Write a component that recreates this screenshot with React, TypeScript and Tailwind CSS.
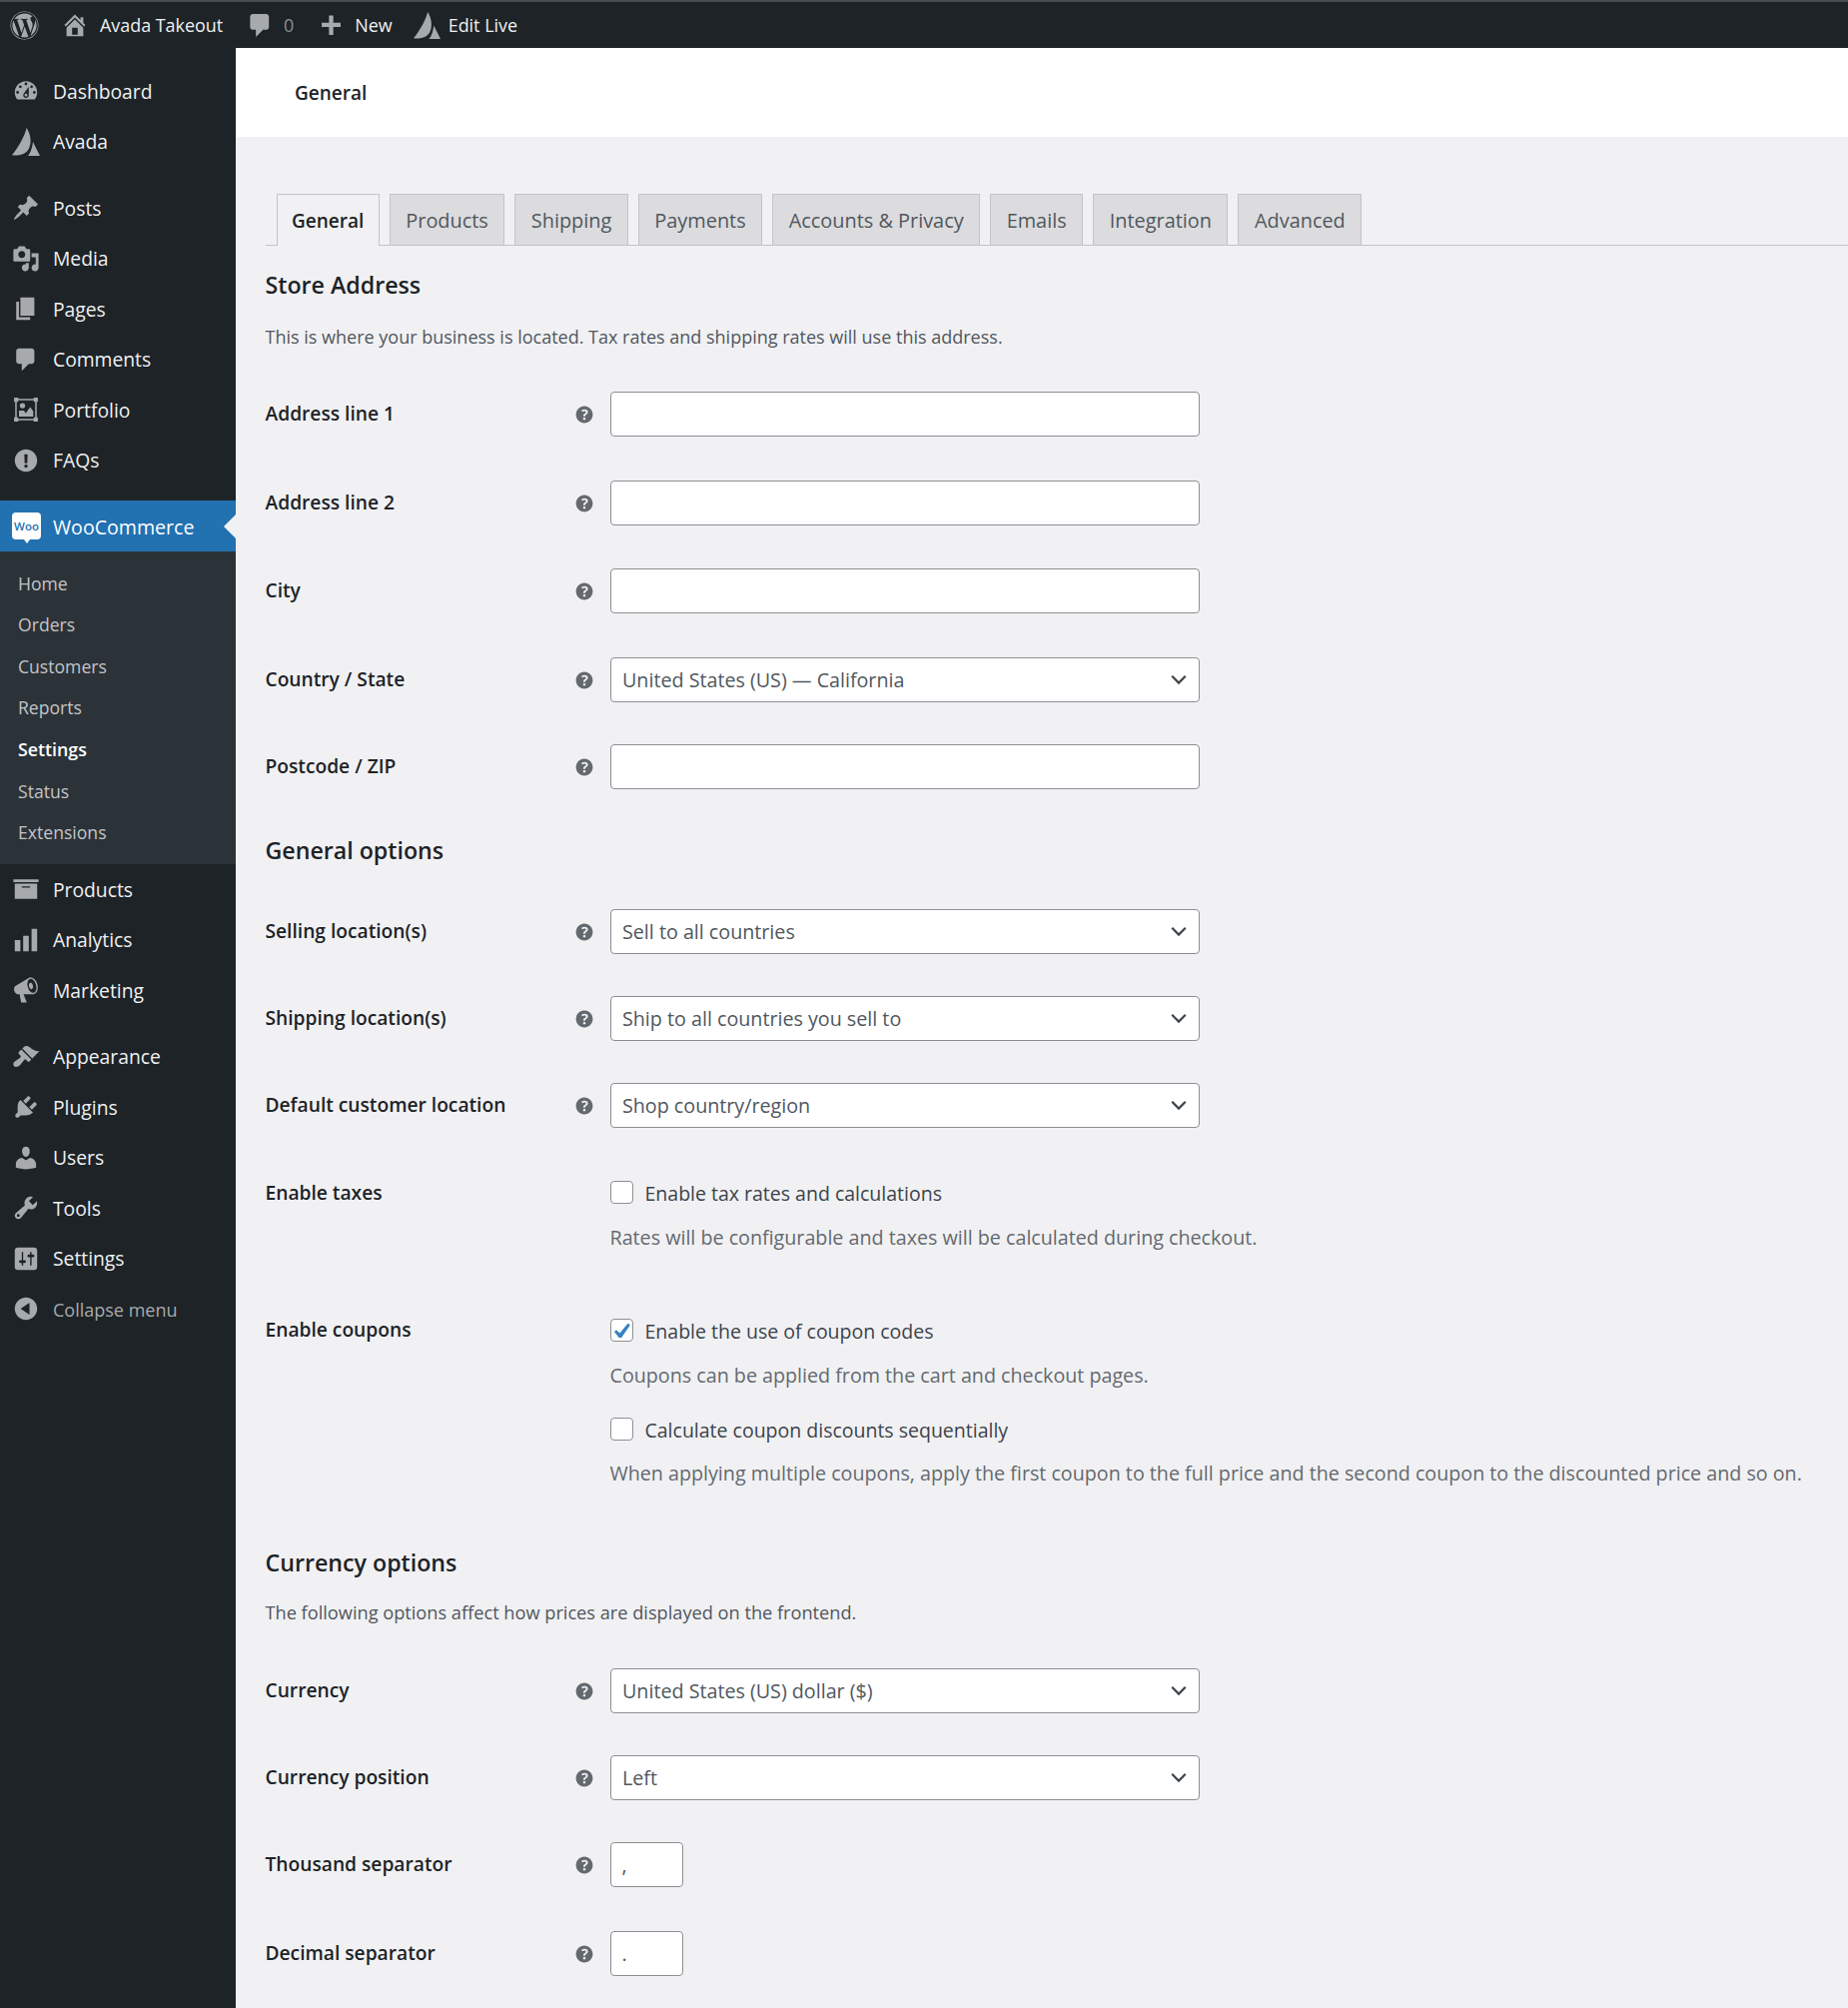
// App.tsx - WooCommerce general settings screen
import type { ReactNode } from "react";
import { FaWordpress } from "react-icons/fa";

const icons: Record<string, string> = {
  dashboard:
    "M3.76 16h12.48c1.1-1.37 1.76-3.11 1.76-5 0-4.42-3.58-8-8-8s-8 3.58-8 8c0 1.89.66 3.63 1.76 5zM10 4c.55 0 1 .45 1 1s-.45 1-1 1-1-.45-1-1 .45-1 1-1zM6 6c.55 0 1 .45 1 1s-.45 1-1 1-1-.45-1-1 .45-1 1-1zm8 0c.55 0 1 .45 1 1s-.45 1-1 1-1-.45-1-1 .45-1 1-1zm-5.37 5.55L12 7v6c0 1.1-.9 2-2 2s-2-.9-2-2c0-.57.24-1.08.63-1.45zM4 10c.55 0 1 .45 1 1s-.45 1-1 1-1-.45-1-1 .45-1 1-1zm12 0c.55 0 1 .45 1 1s-.45 1-1 1-1-.45-1-1 .45-1 1-1zm-5 3c0-.55-.45-1-1-1s-1 .45-1 1 .45 1 1 1 1-.45 1-1z",
  avada: "M10.500 0C9 6 4.500 14 0 19.500c4 .5 9.500 0 12-4.500 2.500-5 1-11-1.500-15zM15 10l5 10h-8.500c2-2.500 3-6 3.500-10z",
  posts:
    "M10.44 3.02l1.82-1.82 6.36 6.35-1.83 1.82c-1.05-.68-2.48-.57-3.41.36l-.75.75c-.92.93-1.04 2.35-.35 3.41l-1.83 1.82-2.41-2.41-2.8 2.79c-.42.42-3.38 2.71-3.8 2.29s1.86-3.39 2.28-3.81l2.79-2.79L4.1 9.36l1.83-1.82c1.05.69 2.48.57 3.4-.36l.75-.75c.93-.92 1.05-2.35.36-3.41z",
  media:
    "M13 11V4c0-.55-.45-1-1-1h-1.67L9 1H5L3.67 3H2c-.55 0-1 .45-1 1v7c0 .55.45 1 1 1h10c.55 0 1-.45 1-1zM7 4.500c1.380 0 2.500 1.120 2.500 2.500S8.380 9.500 7 9.500 4.500 8.380 4.500 7 5.620 4.500 7 4.500zM14 6h5v10.500c0 1.380-1.120 2.500-2.500 2.500S14 17.880 14 16.500s1.120-2.500 2.500-2.500c.170 0 .340.020.500.050V9h-3V6zm-4 8.050V13h2v3.500c0 1.380-1.120 2.500-2.500 2.500S7 17.880 7 16.500 8.120 14 9.500 14c.170 0 .340.020.500.050z",
  pages: "M6 15V2h10v13H6zm-1 1h8v2H3V5h2v11z",
  comments: "M5 2h9c1.100 0 2 .9 2 2v7c0 1.100-.9 2-2 2h-2l-5 5v-5H5c-1.100 0-2-.9-2-2V4c0-1.100.9-2 2-2z",
  faq: "M10 2c4.420 0 8 3.580 8 8s-3.580 8-8 8-8-3.580-8-8 3.580-8 8-8zm1.200 3.500H8.800l.3 6.500h1.800l.3-6.500zM10 12.800c-.7 0-1.200.5-1.200 1.150s.5 1.150 1.200 1.150 1.200-.5 1.200-1.150-.5-1.150-1.200-1.150z",
  products: "M19 3v2H1V3h18zM2 6h16v11H2V6zm11 3V8H7v1h6z",
  analytics: "M18 18V2h-4v16h4zm-6 0V7H8v11h4zm-6 0v-8H2v8h4z",
  marketing:
    "M18.150 5.940c.460 1.620.380 3.220-.020 4.480-.420 1.280-1.260 2.180-2.300 2.480-.160.060-.260.060-.400.060-.060.020-.120.020-.180.020-.060.020-.140.020-.220.020h-6.800l2.220 5.500c.020.140-.060.260-.140.340-.080.100-.240.160-.340.160H6.950c-.100 0-.260-.060-.340-.160-.080-.080-.160-.200-.140-.340l-1-5.500H4.250l-.020-.020c-.500.060-1.080-.180-1.540-.620s-.880-1.080-1.060-1.880c-.240-.800-.200-1.560-.020-2.200.180-.620.580-1.080 1.060-1.300l.020-.020 9-5.400c.100-.060.180-.100.240-.160.060-.040.140-.080.240-.120.160-.080.280-.120.500-.180 1.040-.300 2.240.100 3.220.980s1.840 2.240 2.260 3.860zm-2.580 5.980h-.020c.400-.100.740-.340 1.040-.700.580-.700.860-1.760.860-3.040-.020-.640-.100-1.300-.280-1.980-.340-1.360-1.020-2.500-1.780-3.240s-1.680-1.100-2.460-.880c-.820.220-1.400.960-1.700 2-.320 1.040-.280 2.360.060 3.720.380 1.360 1 2.500 1.800 3.240.780.740 1.620 1.100 2.480.880zm-2.540-7.080c.220-.040.420-.020.620.040.380.160.760.480 1.020 1s.420 1.200.420 1.780c0 .300-.040.560-.120.800-.180.480-.440.840-.860.940-.340.100-.800-.060-1.140-.400s-.640-.860-.780-1.500c-.180-.620-.120-1.240.020-1.720s.480-.840.820-.940z",
  appearance:
    "M14.480 11.060L7.410 3.990l1.500-1.500c.500-.560 2.300-.470 3.510.320 1.210.800 1.430 1.280 2.910 2.100 1.180.640 2.450 1.260 4.450.850zm-.710.710L6.700 4.700 4.930 6.470c-.390.390-.390 1.020 0 1.410l1.060 1.060c.390.390.390 1.030 0 1.420-.600.600-1.430 1.110-2.210 1.690-.350.260-.700.530-1.010.840C1.430 13.230 1 14.290 1 15.170c0 .600.200 1.110.500 1.410.290.290.770.500 1.410.500.880 0 1.940-.430 3.290-1.780.310-.310.580-.660.840-1.010.580-.780 1.090-1.610 1.690-2.210.390-.390 1.030-.390 1.420 0l1.060 1.060c.390.390 1.020.390 1.410 0z",
  plugins:
    "M13.110 4.360L9.870 7.600 8 5.730l3.240-3.240c.350-.340 1.050-.200 1.560.320.520.510.660 1.210.310 1.550zm-8 1.770l.910-1.120 9.010 9.010-1.190.840c-.710.710-2.630 1.160-3.820 1.160H6.140L4.900 17.260c-.590.590-1.540.590-2.120 0-.590-.580-.590-1.530 0-2.120l1.240-1.240v-3.880c0-1.130.400-3.190 1.090-3.890zm7.260 3.970l3.240-3.240c.340-.350 1.040-.210 1.550.310.520.510.660 1.210.310 1.550l-3.240 3.250z",
  users:
    "M10 9.250c-2.270 0-2.730-3.440-2.730-3.440C7 4.020 7.820 2 9.970 2c2.160 0 2.980 2.020 2.710 3.810 0 0-.410 3.440-2.680 3.440zm0 2.570L12.720 10c2.390 0 4.520 2.330 4.520 4.530v2.490s-3.650 1.130-7.240 1.130c-3.650 0-7.240-1.130-7.240-1.130v-2.490c0-2.250 1.940-4.480 4.470-4.480z",
  tools:
    "M16.680 9.770c-1.340 1.340-3.300 1.670-4.950.990l-5.410 6.520c-.990.990-2.590.990-3.580 0s-.990-2.590 0-3.570l6.520-5.420c-.680-1.650-.350-3.610.990-4.950 1.280-1.280 3.120-1.620 4.720-1.060l-2.890 2.890 2.820 2.820 2.860-2.870c.530 1.580.180 3.390-1.080 4.650zM3.810 16.210c.400.390 1.040.390 1.430 0 .400-.400.400-1.040 0-1.430-.390-.400-1.030-.400-1.430 0-.390.390-.390 1.030 0 1.430z",
  settings:
    "M18 16V4c0-1.100-.9-2-2-2H4c-1.100 0-2 .9-2 2v12c0 1.100.9 2 2 2h12c1.100 0 2-.9 2-2zM8 11h1c.550 0 1 .450 1 1s-.450 1-1 1H8v1.500c0 .280-.220.500-.500.500s-.500-.220-.500-.500V13H6c-.550 0-1-.450-1-1s.450-1 1-1h1V5.500c0-.280.220-.500.500-.500s.500.220.500.500V11zm5-2h-1c-.550 0-1-.450-1-1s.450-1 1-1h1V5.500c0-.280.220-.500.500-.500s.500.220.500.500V7h1c.550 0 1 .450 1 1s-.450 1-1 1h-1v5.500c0 .280-.220.500-.500.500s-.500-.220-.500-.500V9z",
  collapse: "M10 2c4.420 0 8 3.580 8 8s-3.580 8-8 8-8-3.580-8-8 3.580-8 8-8zm2.500 3.800L6.200 10l6.300 4.200V5.800z",
  home: "M16 8.500l1.530 1.530-1.060 1.060L10 4.620l-6.470 6.470-1.060-1.060L10 2.500l4 4v-2h2v4zm-6-2.460l6 5.990V18H4v-5.970zM12 17v-5H8v5h4z",
  plus: "M17 8v3.200h-5.400V17H8.400v-5.800H3V8h5.400V2.500h3.200V8H17z",
};

const helpPath =
  "M17 10c0-3.870-3.140-7-7-7-3.870 0-7 3.130-7 7 0 3.860 3.130 7 7 7 3.860 0 7-3.140 7-7zm-6.300 1.480H9.140v-.430c0-.380.080-.700.240-.980s.460-.570.880-.890c.410-.290.680-.530.810-.710.140-.180.200-.390.200-.62 0-.250-.090-.44-.280-.58-.190-.130-.45-.19-.79-.19-.58 0-1.250.190-2 .570l-.64-1.280c.87-.49 1.800-.74 2.770-.74.810 0 1.450.200 1.920.580.480.390.710.910.710 1.550 0 .430-.090.800-.290 1.110-.190.320-.570.670-1.110 1.060-.380.280-.610.490-.710.630-.100.150-.150.340-.150.570v.350zm-1.470 2.740c-.180-.180-.280-.430-.28-.75 0-.330.090-.58.270-.76s.44-.27.78-.27c.33 0 .59.090.77.27.18.190.27.44.27.76 0 .31-.09.56-.28.74-.18.19-.44.28-.76.28-.33 0-.59-.09-.77-.27z";

const Dash = ({ name, size = 28 }: { name: string; size?: number }) => (
  <svg width={size} height={size} viewBox="0 0 20 20" className="shrink-0 fill-[#a7aaad]">
    <path fillRule="evenodd" d={icons[name]} />
  </svg>
);

const PortfolioIcon = () => (
  <svg width={28} height={28} viewBox="0 0 20 20" className="shrink-0 fill-[#a7aaad]">
    <path
      fillRule="evenodd"
      d="M1.500 1.500h3v.8h11v-.8h3v3h-.8v11h.8v3h-3v-.8h-11v.8h-3v-3h.8v-11h-.8v-3zm1.900 3v11h1v1.100h11.200v-1.100h1v-11h-1V3.400H4.400v1.100h-1z"
    />
    <circle cx="7.500" cy="7.200" r="1.900" />
    <path d="M5 15v-4.300h3.600l1.200 2 3.200-4.500 2.200 3.100V15z" />
  </svg>
);

const HelpTip = () => (
  <svg width={24} height={24} viewBox="0 0 20 20" className="mr-[14px] shrink-0 fill-[#646970]">
    <path d={helpPath} fillRule="evenodd" />
  </svg>
);

const SideItem = ({ icon, label }: { icon: string; label: string }) => (
  <div className="flex h-[50.5px] items-center gap-[13px] pl-[12px] text-[19.3px] text-[#f0f0f1]">
    {icon === "portfolio" ? <PortfolioIcon /> : <Dash name={icon} />}
    <span className="mt-[2px]">{label}</span>
  </div>
);

const subItems = ["Home", "Orders", "Customers", "Reports", "Settings", "Status", "Extensions"];

const Sidebar = () => (
  <aside className="w-[236px] shrink-0 bg-[#1d2327] pt-[18px]">
    <SideItem icon="dashboard" label="Dashboard" />
    <SideItem icon="avada" label="Avada" />
    <div className="h-[16px]" />
    <SideItem icon="posts" label="Posts" />
    <SideItem icon="media" label="Media" />
    <SideItem icon="pages" label="Pages" />
    <SideItem icon="comments" label="Comments" />
    <SideItem icon="portfolio" label="Portfolio" />
    <SideItem icon="faq" label="FAQs" />
    <div className="h-[15px]" />

    {/* Active menu */}
    <div className="relative flex h-[51px] items-center gap-[12px] bg-[#2271b1] pl-[12px] text-[19.6px] text-white">
      <div className="relative flex h-[27px] w-[29px] items-center justify-center rounded-[4px] bg-white">
        <span className="text-[11.5px] leading-none font-semibold text-[#2271b1]">Woo</span>
        <span className="absolute -bottom-[4px] left-[12px] size-0 border-x-[3px] border-t-[4px] border-x-transparent border-t-white" />
      </div>
      <span className="mt-[2px]">WooCommerce</span>
      <span className="absolute top-[14px] right-0 size-0 border-y-[12px] border-r-[12px] border-y-transparent border-r-[#f1f1f3]" />
    </div>
    <div className="bg-[#2c3338] py-[11px]">
      {subItems.map((item) => (
        <div
          key={item}
          className={
            item === "Settings"
              ? "flex h-[41.6px] items-center pl-[18px] text-[17.8px] font-semibold text-white"
              : "flex h-[41.6px] items-center pl-[18px] text-[17.6px] text-[#c3c4c7]"
          }
        >
          {item}
        </div>
      ))}
    </div>

    <SideItem icon="products" label="Products" />
    <SideItem icon="analytics" label="Analytics" />
    <SideItem icon="marketing" label="Marketing" />
    <div className="h-[16px]" />
    <SideItem icon="appearance" label="Appearance" />
    <SideItem icon="plugins" label="Plugins" />
    <SideItem icon="users" label="Users" />
    <SideItem icon="tools" label="Tools" />
    <SideItem icon="settings" label="Settings" />
    <div className="flex h-[50.5px] items-center gap-[13px] pl-[12px] text-[18px] text-[#a7aaad]">
      <Dash name="collapse" />
      <span className="mt-[2px]">Collapse menu</span>
    </div>
  </aside>
);

const TopBar = () => (
  <header className="flex h-[48px] items-center border-t-2 border-[#474c50] bg-[#1d2327] pl-[10px] text-[17.9px] text-[#f0f0f1]">
    <FaWordpress className="size-[29px] text-[#a7aaad]" />
    <span className="ml-[22px] flex">
      <Dash name="home" size={28} />
    </span>
    <span className="ml-[11px]">Avada Takeout</span>
    <span className="ml-[23px]">
      <Dash name="comments" size={29} />
    </span>
    <span className="ml-[9px] text-[#8c8f94]">0</span>
    <span className="ml-[24px]">
      <Dash name="plus" size={27} />
    </span>
    <span className="ml-[10px]">New</span>
    <span className="ml-[21px]">
      <Dash name="avada" size={27} />
    </span>
    <span className="ml-[8px]">Edit Live</span>
  </header>
);

const tabs = ["General", "Products", "Shipping", "Payments", "Accounts & Privacy", "Emails", "Integration", "Advanced"];

const Tabs = () => (
  <nav className="mt-[57px] flex h-[52px] gap-[10px] border-b border-[#c3c4c7] pl-[11px]">
    {tabs.map((tab, i) => (
      <div
        key={tab}
        className={
          i === 0
            ? "-mb-px flex h-[52px] items-center border border-b-0 border-[#c3c4c7] bg-[#f1f1f3] px-[14.5px] pt-[1px] text-[19px] font-semibold text-[#1d2327]"
            : "flex h-[51px] items-center border border-b-0 border-[#c3c4c7] bg-[#dcdcde] px-[15.5px] pt-[1px] text-[19.9px] text-[#50575e]"
        }
      >
        {tab}
      </div>
    ))}
  </nav>
);

const Heading = ({ className, children }: { className: string; children: ReactNode }) => (
  <h2 className={`h-[30px] text-[23.2px] leading-[30px] font-semibold text-[#1d2327] ${className}`}>{children}</h2>
);

const Row = ({ label, className, children }: { label: string; className: string; children: ReactNode }) => (
  <div className={`flex h-[45px] items-center ${className}`}>
    <label className="w-[307px] shrink-0 text-[19.2px] font-semibold text-[#1d2327]">{label}</label>
    <HelpTip />
    {children}
  </div>
);

const TextField = ({ small, value = "" }: { small?: boolean; value?: string }) => (
  <input
    readOnly
    value={value}
    className={
      small
        ? "h-[45px] w-[73px] rounded-[4px] border border-[#8c8f94] bg-white px-[11px] text-[19.7px] text-[#50575e]"
        : "h-[45px] w-[590px] rounded-[4px] border border-[#8c8f94] bg-white px-[11px] text-[19.7px] text-[#50575e]"
    }
  />
);

const SelectField = ({ value }: { value: string }) => (
  <div className="relative h-[45px] w-[590px]">
    <select
      defaultValue={value}
      className="h-full w-full appearance-none rounded-[4px] border border-[#8c8f94] bg-white pl-[11.5px] text-[19.7px] text-[#50575e]"
    >
      <option>{value}</option>
    </select>
    <svg width={18} height={18} viewBox="0 0 20 20" className="pointer-events-none absolute top-[13px] right-[12px] fill-none stroke-[#3c434a] stroke-[2.4]">
      <path d="M2.500 6.500L10 14l7.500-7.500" />
    </svg>
  </div>
);

const Check = ({ checked, label, className }: { checked?: boolean; label: string; className: string }) => (
  <label className={`ml-[345px] flex h-[23px] items-center gap-[12px] text-[19.5px] text-[#3c434a] ${className}`}>
    <span className="relative size-[23px] shrink-0 rounded-[4px] border border-[#8c8f94] bg-white">
      {checked && (
        <svg viewBox="0 0 20 20" className="absolute inset-0 fill-[#3582c4]">
          <path d="M15.800 3.500l2.200 1.500-8.300 12.200H7.300L2.800 11.500l2-1.800 3.200 3.100z" />
        </svg>
      )}
    </span>
    <span className="pt-[2px]">{label}</span>
  </label>
);

const Desc = ({ className, children }: { className: string; children: ReactNode }) => (
  <p className={`ml-[345px] h-[24px] text-[19.7px] leading-[24px] whitespace-nowrap text-[#646970] ${className}`}>{children}</p>
);

export default function App() {
  return (
    <div className="h-[2010px] w-[1850px] overflow-hidden bg-[#f1f1f3] font-['Open_Sans',sans-serif]">
      <TopBar />
      <div className="flex h-[1962px]">
        <Sidebar />
        <main className="min-w-0 flex-1">
          <div className="flex h-[89px] items-center bg-white pt-[1px] pl-[59px] text-[19px] font-semibold text-[#1d2327]">General</div>

          <div className="ml-[29.5px]">
            <Tabs />

            <Heading className="mt-[24px]">Store Address</Heading>
            <p className="mt-[25px] h-[24px] text-[18px] leading-[24px] text-[#50575e]">
              This is where your business is located. Tax rates and shipping rates will use this address.
            </p>

            <Row label="Address line 1" className="mt-[43px]">
              <TextField />
            </Row>
            <Row label="Address line 2" className="mt-[44px]">
              <TextField />
            </Row>
            <Row label="City" className="mt-[43px]">
              <TextField />
            </Row>
            <Row label="Country / State" className="mt-[44px]">
              <SelectField value="United States (US) — California" />
            </Row>
            <Row label="Postcode / ZIP" className="mt-[42px]">
              <TextField />
            </Row>

            <Heading className="mt-[46px]">General options</Heading>
            <Row label="Selling location(s)" className="mt-[44px]">
              <SelectField value="Sell to all countries" />
            </Row>
            <Row label="Shipping location(s)" className="mt-[42px]">
              <SelectField value="Ship to all countries you sell to" />
            </Row>
            <Row label="Default customer location" className="mt-[42px]">
              <SelectField value="Shop country/region" />
            </Row>

            <div className="relative mt-[53px]">
              <span className="absolute top-0 left-0 text-[19.2px] leading-[23px] font-semibold text-[#1d2327]">Enable taxes</span>
              <Check label="Enable tax rates and calculations" className="" />
            </div>
            <Desc className="mt-[22px]">Rates will be configurable and taxes will be calculated during checkout.</Desc>

            <div className="relative mt-[69px]">
              <span className="absolute -top-px left-0 text-[19.2px] leading-[23px] font-semibold text-[#1d2327]">Enable coupons</span>
              <Check checked label="Enable the use of coupon codes" className="" />
            </div>
            <Desc className="mt-[22px]">Coupons can be applied from the cart and checkout pages.</Desc>
            <Check label="Calculate coupon discounts sequentially" className="mt-[30px]" />
            <Desc className="mt-[21px]">
              When applying multiple coupons, apply the first coupon to the full price and the second coupon to the discounted price and so on.
            </Desc>

            <Heading className="mt-[62px]">Currency options</Heading>
            <p className="mt-[23px] h-[24px] text-[18.2px] leading-[24px] text-[#50575e]">
              The following options affect how prices are displayed on the frontend.
            </p>
            <Row label="Currency" className="mt-[44px]">
              <SelectField value="United States (US) dollar ($)" />
            </Row>
            <Row label="Currency position" className="mt-[42px]">
              <SelectField value="Left" />
            </Row>
            <Row label="Thousand separator" className="mt-[42px]">
              <TextField small value="," />
            </Row>
            <Row label="Decimal separator" className="mt-[44px]">
              <TextField small value="." />
            </Row>
          </div>
        </main>
      </div>
    </div>
  );
}
